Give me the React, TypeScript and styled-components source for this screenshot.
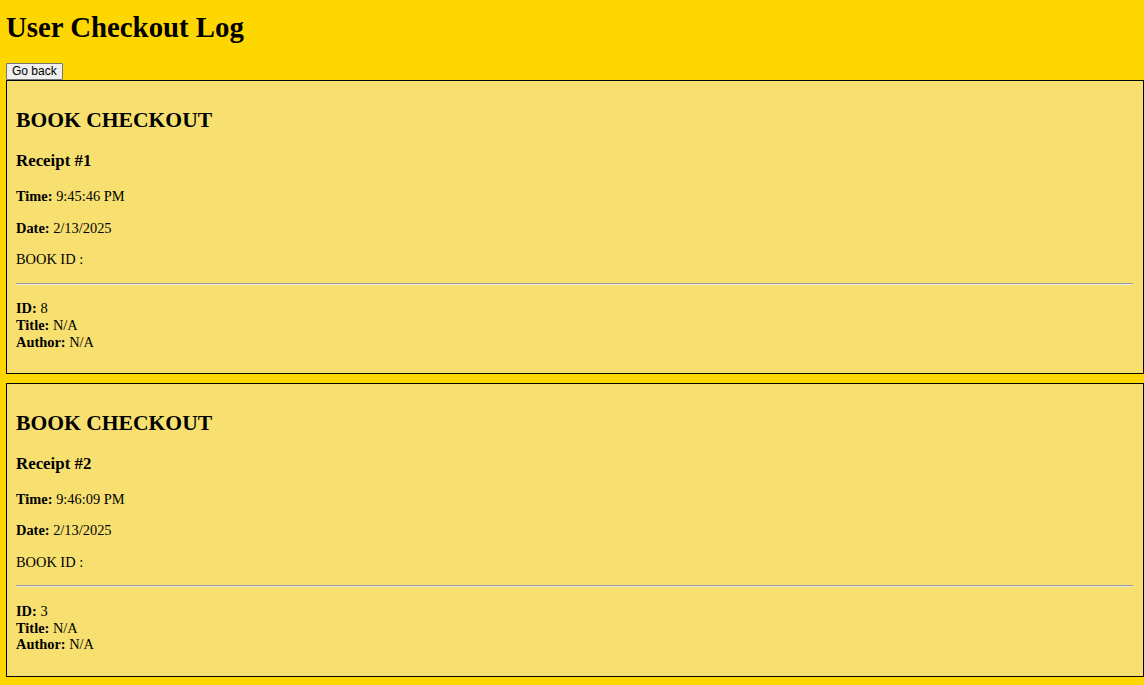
import React from "react";
import styled, { createGlobalStyle } from "styled-components";

const GlobalStyle = createGlobalStyle`
  html, body {
    margin: 0;
    padding: 0;
    background: #ffd700;
  }
  body {
    font-family: "Liberation Serif", "Times New Roman", serif;
    font-size: 14.4px;
    color: #000;
  }
`;

const Page = styled.div`
  padding: 0 0 8px 6px;
`;

const Title = styled.h1`
  margin: 10.5px 0 0 0;
  font-size: 28.8px;
  line-height: 33px;
  font-weight: bold;
`;

const BackButton = styled.button`
  display: block;
  margin-top: 19.5px;
  height: 17px;
  padding: 0 5px;
  font-family: "Liberation Sans", Arial, sans-serif;
  font-size: 12px;
  line-height: 15px;
  color: #000;
  background: #efefef;
  border: 1px solid #767676;
  border-radius: 1px;
  cursor: pointer;
`;

const Card = styled.section`
  border: 1px solid #000;
  background: #f7e070;
  padding: 8px 10px 8px 9px;
  margin-bottom: 8.3px;
`;

const CardHeading = styled.h2`
  margin: 19px 0 18px;
  font-size: 21.6px;
  line-height: 25px;
  font-weight: bold;
`;

const ReceiptHeading = styled.h3`
  margin: 0 0 17.6px;
  font-size: 16.85px;
  line-height: 19.4px;
  font-weight: bold;
`;

const Line = styled.p`
  margin: 15px 0;
  line-height: 16.55px;
`;

const Divider = styled.hr`
  height: 0;
  margin: 13.6px 0 15.8px;
  border: 0;
  border-top: 1px solid #9a9a9a;
  border-bottom: 1px solid #e6e6e6;
`;

const Details = styled.p`
  margin: 15.8px 0 15px;
  line-height: 16.6px;
`;

type Receipt = {
  n: number;
  time: string;
  date: string;
  id: number;
  title: string;
  author: string;
};

const receipts: Receipt[] = [
  { n: 1, time: "9:45:46 PM", date: "2/13/2025", id: 8, title: "N/A", author: "N/A" },
  { n: 2, time: "9:46:09 PM", date: "2/13/2025", id: 3, title: "N/A", author: "N/A" },
];

export default function App() {
  return (
    <>
      <GlobalStyle />
      <Page>
        <Title>User Checkout Log</Title>
        <BackButton>Go back</BackButton>
        {receipts.map((r) => (
          <Card key={r.n}>
            <CardHeading>BOOK CHECKOUT</CardHeading>
            <ReceiptHeading>Receipt #{r.n}</ReceiptHeading>
            <Line>
              <strong>Time:</strong> {r.time}
            </Line>
            <Line>
              <strong>Date:</strong> {r.date}
            </Line>
            <Line>BOOK ID :</Line>
            <Divider />
            <Details>
              <strong>ID:</strong> {r.id}
              <br />
              <strong>Title:</strong> {r.title}
              <br />
              <strong>Author:</strong> {r.author}
            </Details>
          </Card>
        ))}
      </Page>
    </>
  );
}
